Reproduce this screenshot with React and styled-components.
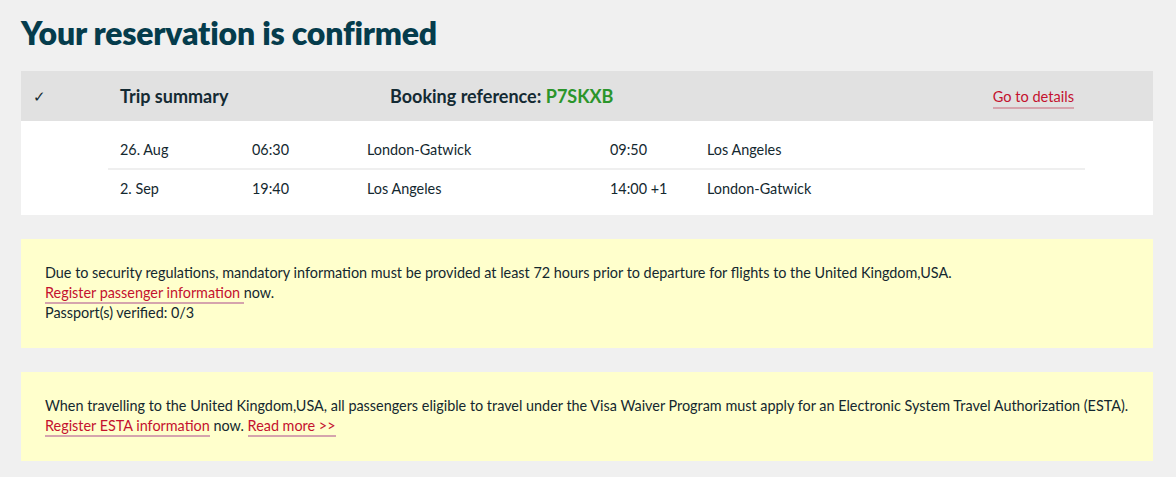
import React from 'react';
import styled, { createGlobalStyle } from 'styled-components';

const GlobalStyle = createGlobalStyle`
  body {
    margin: 0;
    background: #f0f0f0;
    font-family: Lato, "Liberation Sans", sans-serif;
    color: #14282f;
  }
`;

const Page = styled.div`
  padding: 13px 23px 0 21px;
`;

const Title = styled.h1`
  margin: 0 0 19px;
  font-size: 32px;
  line-height: 39px;
  font-weight: 800;
  color: #053c4c;
  letter-spacing: -0.2px;
`;

const Card = styled.section`
  background: #fff;
  margin-bottom: 24px;
`;

const CardHeader = styled.div`
  display: grid;
  grid-template-columns: 87px 270px 1fr auto;
  align-items: center;
  height: 50px;
  background: #e1e1e1;
  padding: 0 79px 0 12px;
  font-size: 18px;
  font-weight: 700;
  color: #142a33;
`;

const Check = styled.span`
  font-size: 15px;
  font-weight: 400;
`;

const Code = styled.span`
  color: #2b952b;
`;

const Link = styled.a`
  color: #c4122f;
  text-decoration: none;
  border-bottom: 2px solid #d5a4ad;
  padding-bottom: 1px;
  cursor: pointer;
`;

const HeaderLink = styled(Link)`
  margin-top: 5px;
  padding-bottom: 2px;
  font-size: 14.6px;
  font-weight: 400;
`;

const Flights = styled.div`
  padding: 10px 68px 8px 87px;
`;

const FlightRow = styled.div`
  display: grid;
  grid-template-columns: 132px 115px 243px 97px 1fr;
  align-items: center;
  height: 37px;
  padding-left: 12px;
  font-size: 14.4px;
  & + & {
    border-top: 2px solid #efefef;
  }
`;

const Notice = styled.div`
  background: #ffffcc;
  padding: 24px 24px 25px;
  font-size: 14.4px;
  line-height: 20px;
  margin-bottom: 24px;
  min-height: ${(p) => p.$minHeight}px;
  box-sizing: border-box;
  &:last-child {
    margin-bottom: 0;
  }
`;

const flights = [
  ['26. Aug', '06:30', 'London-Gatwick', '09:50', 'Los Angeles'],
  ['2. Sep', '19:40', 'Los Angeles', '14:00 +1', 'London-Gatwick'],
];

const App = () => (
  <>
    <GlobalStyle />
    <Page>
      <Title>Your reservation is confirmed</Title>
      <Card>
        <CardHeader>
          <Check>✓</Check>
          <span>Trip summary</span>
          <span>
            Booking reference: <Code>P7SKXB</Code>
          </span>
          <HeaderLink>Go to details</HeaderLink>
        </CardHeader>
        <Flights>
          {flights.map((f) => (
            <FlightRow key={f[0]}>
              {f.map((cell, i) => (
                <span key={i}>{cell}</span>
              ))}
            </FlightRow>
          ))}
        </Flights>
      </Card>
      <Notice $minHeight={108}>
        Due to security regulations, mandatory information must be provided at least 72 hours prior to departure for flights to the United Kingdom,USA.
        <br />
        <Link>Register passenger information </Link>now.
        <br />
        Passport(s) verified: 0/3
      </Notice>
      <Notice $minHeight={88}>
        When travelling to the United Kingdom,USA, all passengers eligible to travel under the Visa Waiver Program must apply for an Electronic System Travel Authorization (ESTA).
        <br />
        <Link>Register ESTA information</Link> now. <Link>Read more &gt;&gt;</Link>
      </Notice>
    </Page>
  </>
);

export default App;
